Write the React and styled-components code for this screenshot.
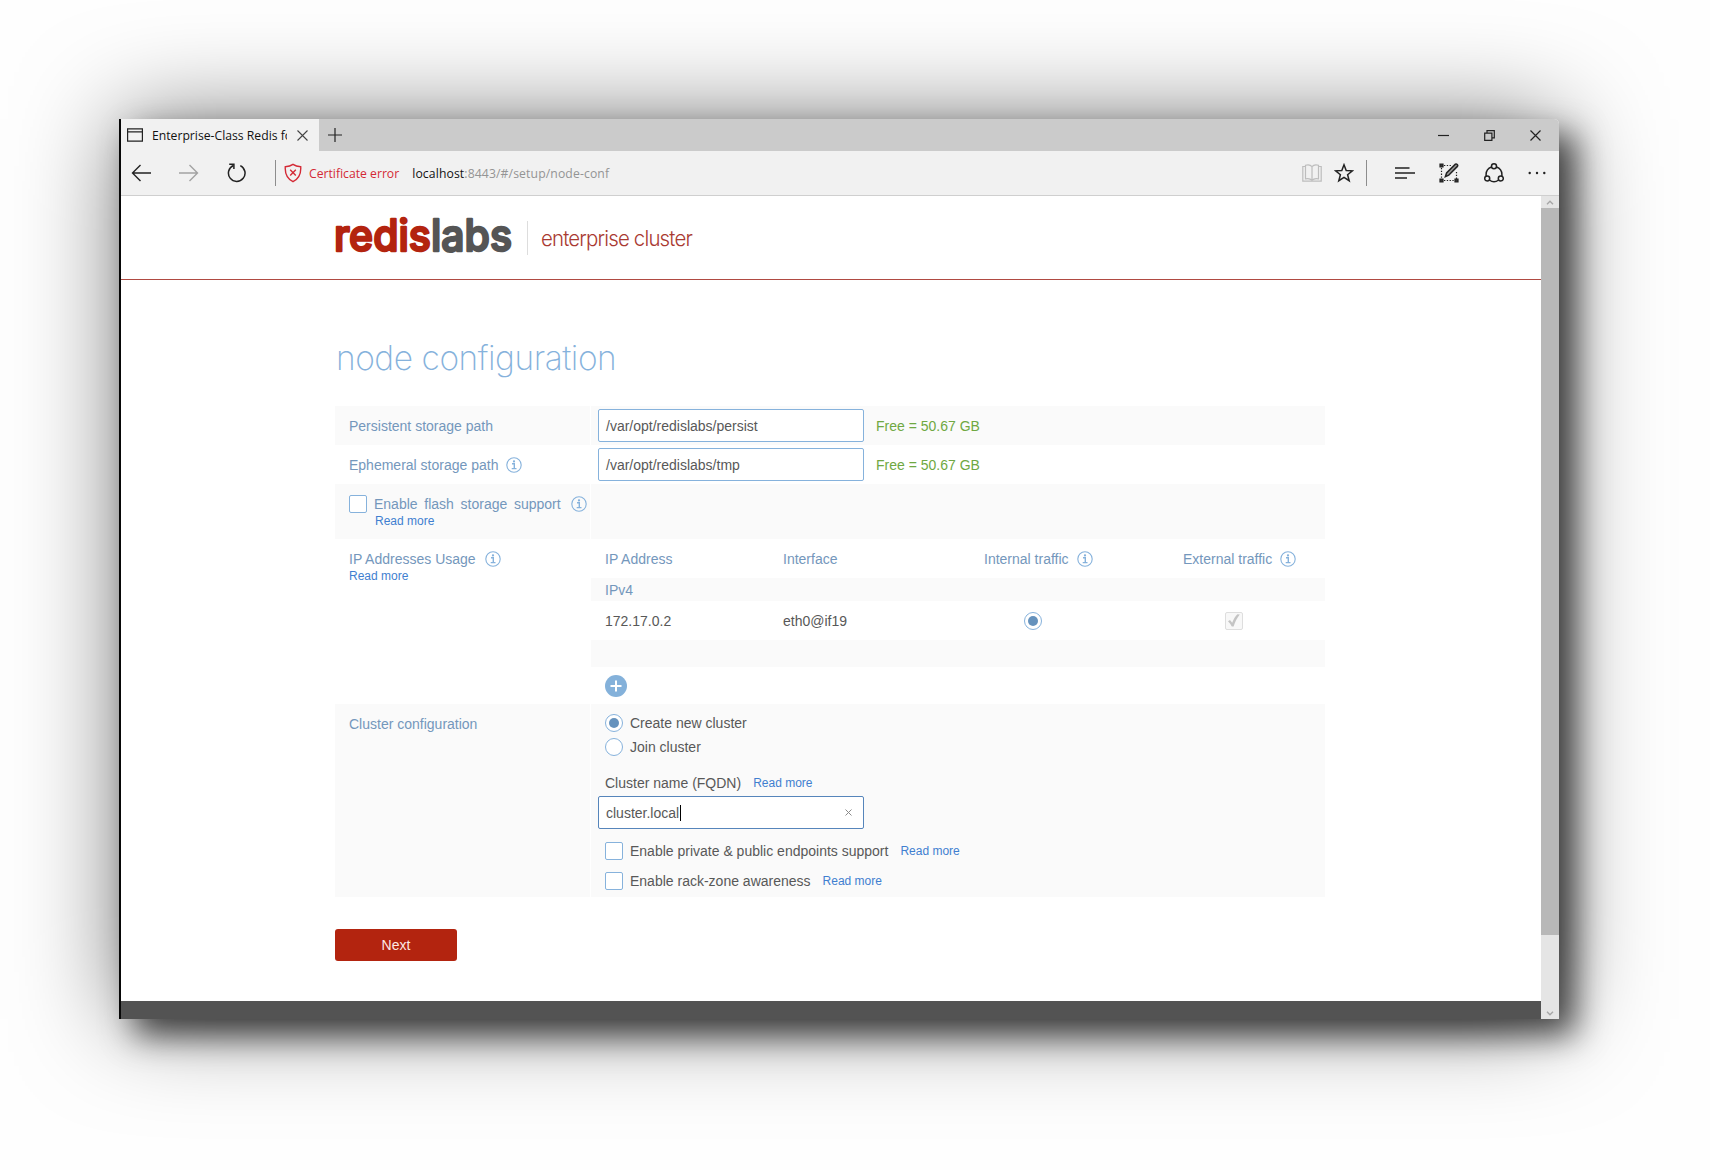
import React from "react";
import styled, { createGlobalStyle, css } from "styled-components";

const colors = {
  label: "#7497bc",
  link: "#3f7fd0",
  border: "#86b2dc",
  accent: "#6592bd",
  text: "#585858",
  red: "#b3240f",
  stripe: "#fafafa",
};

const GlobalStyle = createGlobalStyle`
  body {
    margin: 0;
    background: #fefefe;
    font-family: "Liberation Sans", Arial, sans-serif;
    font-size: 14px;
    color: ${colors.text};
  }
  * { box-sizing: border-box; }
  svg { display: block; flex: none; }
`;

/* ---------- window ---------- */

const Desktop = styled.div`
  height: 1170px;
  padding: 119px 151px 0 119px;
  overflow: hidden;
`;

const Window = styled.div`
  display: flex;
  flex-direction: column;
  width: 1440px;
  height: 900px;
  background: #fff;
  border-left: 2px solid #080808;
  border-top-right-radius: 5px;
  box-shadow:
    16px 16px 32px rgba(0, 0, 0, 0.68),
    0 0 100px rgba(0, 0, 0, 0.5);
`;

const TabStrip = styled.div`
  display: flex;
  align-items: center;
  height: 32px;
  background: #cbcbcb;
  border-top-right-radius: 5px;
  font: 12.2px "Open Sans", sans-serif;
  color: #111;
`;

const Tab = styled.div`
  display: flex;
  align-items: center;
  width: 198px;
  height: 32px;
  padding-left: 6px;
  background: #f1f1f1;
`;

const TabTitle = styled.span`
  width: 135px;
  margin: 0 10px 0 9px;
  padding-top: 1px;
  overflow: hidden;
  white-space: nowrap;
  line-height: 18px;
`;

const NewTab = styled.div`
  margin-left: 9px;
`;

const WindowControls = styled.div`
  display: flex;
  align-items: center;
  gap: 35px;
  margin-left: auto;
  padding-right: 18px;
`;

const Toolbar = styled.div`
  display: flex;
  align-items: center;
  height: 45px;
  padding: 0 13px 0 10px;
  background: #f1f1f1;
  border-bottom: 1px solid #cfcfcf;
  font: 12.2px "Open Sans", sans-serif;
`;

const NavButtons = styled.div`
  display: flex;
  align-items: center;
  gap: 28px;
  width: 144px;
`;

const Divider = styled.div`
  width: 1px;
  height: 26px;
  background: #8d8d8d;
`;

const CertError = styled.div`
  display: flex;
  align-items: center;
  gap: 7px;
  margin-left: 8px;
  color: #d42a36;
`;

const Url = styled.div`
  margin-left: 13px;
  letter-spacing: 0.12px;
  color: #949494;
  span { color: #111; }
`;

const Bookmarks = styled.div`
  display: flex;
  align-items: center;
  gap: 12px;
  margin-left: auto;
  margin-right: 12px;
`;

const Tools = styled.div`
  display: flex;
  align-items: center;
  margin-left: 28px;
  gap: 24.3px;
`;

const Viewport = styled.div`
  display: flex;
  flex: 1;
  min-height: 0;
`;

const Scrollbar = styled.div`
  display: flex;
  flex-direction: column;
  justify-content: space-between;
  width: 18px;
  background: #e5e5e5;
`;

const ArrowBox = styled.div`
  display: flex;
  align-items: center;
  justify-content: center;
  height: 12px;
`;

const Thumb = styled.div`
  height: 727px;
  margin-bottom: auto;
  background: #b8b8b8;
`;

/* ---------- page ---------- */

const Page = styled.div`
  display: flex;
  flex-direction: column;
  flex: 1;
`;

const Header = styled.header`
  display: flex;
  align-items: center;
  height: 84px;
  padding: 0 0 0 214px;
  border-bottom: 1px solid #b04a42;
`;

const LogoMark = styled.svg`
  width: 178px;
  height: 50px;
  margin-top: -6px;
  overflow: visible;
  font-family: Inter, sans-serif;
  font-size: 43.5px;
  font-weight: 500;
  stroke-width: 2.4px;
  stroke-linejoin: round;
`;

const LogoWord = styled.tspan`
  fill: ${(p) => p.$color};
  stroke: ${(p) => p.$color};
`;

const Product = styled.div`
  display: flex;
  align-items: center;
  height: 34px;
  margin-left: 14px;
  padding-left: 13px;
  border-left: 1px solid #ddd;
`;

const ProductName = styled.span`
  width: 150px;
  font-family: Inter, sans-serif;
  font-size: 22px;
  font-weight: 300;
  letter-spacing: -0.9px;
  white-space: nowrap;
  color: #a93a32;
  transform: scaleX(0.93);
  transform-origin: 0 50%;
`;

const Main = styled.main`
  display: flex;
  flex-direction: column;
  flex: 1;
  width: 1204px;
  padding-left: 214px;
`;

const Title = styled.h1`
  height: 44px;
  margin: 56px 0 26px 1px;
  font-family: Inter, sans-serif;
  font-size: 33.5px;
  font-weight: 200;
  line-height: 44px;
  letter-spacing: -0.45px;
  color: ${colors.border};
  white-space: nowrap;
`;

const Row = styled.section`
  display: grid;
  grid-template-columns: 255px 1fr;
  column-gap: 1px;
  height: ${(p) => p.$height}px;
  > * { background: ${(p) => (p.$striped ? colors.stripe : "transparent")}; }
`;

const LabelCell = styled.div`
  padding: 11px 0 0 14px;
  line-height: 18px;
  color: ${colors.label};
  white-space: nowrap;
`;

const LabelLine = styled.div`
  display: flex;
  align-items: center;
  height: 18px;
  gap: ${(p) => p.$gap || 0}px;
  word-spacing: ${(p) => p.$spacing || 0}px;
`;

const InfoSlot = styled.span`
  margin-left: 3px;
`;

const Link = styled.a`
  display: block;
  padding-top: 1px;
  font-size: 12px;
  line-height: 15px;
  color: ${colors.link};
  white-space: nowrap;
  word-spacing: 0;
  margin-left: ${(p) => p.$indent || 0}px;
`;

const FieldCell = styled.div`
  display: flex;
  align-items: flex-start;
  gap: 12px;
  padding: 3px 0 0 7px;
`;

const TextField = styled.div`
  display: flex;
  align-items: center;
  width: 266px;
  height: 33px;
  padding: 0 11px 0 7px;
  background: #fff;
  border: 1px solid ${(p) => (p.$focused ? "#5685bb" : colors.border)};
  border-radius: 2px;
`;

const Caret = styled.i`
  width: 1px;
  height: 16px;
  margin: 0 auto 0 1px;
  background: #000;
`;

const Free = styled.span`
  line-height: 34px;
  color: #6fa842;
`;

const Table = styled.div`
  display: grid;
  grid-template-rows: 39px 23px 39px 27px 37px;
`;

const TableRow = styled.div`
  display: grid;
  grid-template-columns: 178px 201px 199px 1fr;
  align-items: center;
  padding-left: 14px;
  background: ${(p) => (p.$striped ? colors.stripe : "transparent")};
  color: ${(p) => (p.$head ? colors.label : colors.text)};
`;

const HeadCell = styled.div`
  display: flex;
  align-items: center;
  gap: 8px;
  height: 20px;
`;

const ControlCell = styled.div`
  padding-left: ${(p) => p.$offset}px;
`;

const Box = styled.span`
  display: flex;
  align-items: center;
  justify-content: center;
  flex: none;
  width: 18px;
  height: 18px;
  border: 1px solid ${colors.border};
  border-radius: 2px;
  background: #fff;
  ${(p) =>
    p.$disabled &&
    css`
      border-color: #dedede;
      background: #f8f8f8;
    `}
`;

const RadioDot = styled.span`
  display: flex;
  align-items: center;
  justify-content: center;
  flex: none;
  width: 18px;
  height: 18px;
  border: 1px solid ${colors.border};
  border-radius: 50%;
  background: #fff;
  &::after {
    content: "";
    width: 10px;
    height: 10px;
    border-radius: 50%;
    background: ${(p) => (p.$checked ? colors.accent : "transparent")};
  }
`;

const ClusterCell = styled.div`
  display: flex;
  flex-direction: column;
  padding: 7px 0 0 14px;
`;

const Option = styled.label`
  display: flex;
  align-items: center;
  gap: 7px;
  height: ${(p) => p.$height}px;
  white-space: nowrap;
`;

const Caption = styled.div`
  display: flex;
  align-items: center;
  gap: 12px;
  height: 18px;
  margin-top: 15px;
`;

const NameField = styled(TextField)`
  margin: 4px 0 8px -7px;
`;

const NextButton = styled.button`
  width: 122px;
  height: 32px;
  margin-top: 32px;
  padding: 0;
  border: 0;
  border-radius: 3px;
  background: ${colors.red};
  color: #fde8e4;
  font: 14px "Liberation Sans", Arial, sans-serif;
`;

const Footer = styled.footer`
  height: 18px;
  background: #535353;
`;

/* ---------- icons ---------- */

const Svg = ({ w, h, color = "#222", sw = 1.2, children }) => (
  <svg width={w} height={h} viewBox={`0 0 ${w} ${h}`} fill="none" stroke={color} strokeWidth={sw}>
    {children}
  </svg>
);

const InfoIcon = () => (
  <Svg w={16} h={16} color={colors.border} sw={1.1}>
    <circle cx="8" cy="8" r="7.2" />
    <path d="M6 6.800h2.300v4.700M5.700 11.600h4.800" strokeWidth="1.400" />
    <circle cx="8" cy="4.400" r=".6" fill={colors.border} />
  </Svg>
);

const Cross = ({ size, color, sw }) => (
  <Svg w={size} h={size} color={color} sw={sw}>
    <path d={`M.5.5L${size - 0.5} ${size - 0.5}M${size - 0.5}.5L.5 ${size - 0.5}`} />
  </Svg>
);

const TabIcon = () => (
  <Svg w={16} h={14} sw={1.2}>
    <path d="M.6.8h14.800v12.400H.6zM.6 3.800h14.800" />
  </Svg>
);

const Arrow = ({ forward }) => (
  <Svg w={20} h={18} color={forward ? "#a2a2a2" : "#222"} sw={1.4}>
    <path d={forward ? "M0 9h18M10.500 1l8 8-8 8" : "M20 9H2M9.500 1l-8 8 8 8"} />
  </Svg>
);

const Refresh = () => (
  <Svg w={20} h={20} sw={1.5}>
    <path d="M13.300 2.600A8.300 8.300 0 1 1 6.400 2.500" />
    <path d="M2.200 1.300h4.700v4.600" />
  </Svg>
);

const Shield = () => (
  <Svg w={18} h={20} color="#d42a36" sw={1.4}>
    <path d="M9 1.400C6.800 3 4.200 3.600 1.300 3.700c-.5 7 1.600 11.800 7.700 14.900 6.100-3.100 8.200-7.900 7.700-14.900C13.800 3.600 11.200 3 9 1.400z" />
    <path d="M6.200 6.800l5.600 5.600M11.800 6.800l-5.600 5.600" />
  </Svg>
);

const Book = () => (
  <Svg w={20} h={18} color="#bdbdbd" sw={1.2}>
    <path d="M3.500 2.500H.8v14.700h18.400V2.500h-2.700" />
    <path d="M10 2.600C8.500.8 5.500.6 3.500 1.200v13.600c2.300-.5 5-.3 6.500 1.500 1.500-1.800 4.200-2 6.500-1.500V1.200C14.500.6 11.500.8 10 2.600zM10 2.600v14" />
  </Svg>
);

const Star = () => (
  <Svg w={20} h={20} sw={1.5}>
    <path d="M10 1.800l2.200 5.700 6.200.3-4.800 3.900 1.600 6-5.200-3.400-5.200 3.400 1.600-6L1.600 7.800l6.200-.3z" />
  </Svg>
);

const Hub = () => (
  <Svg w={20} h={12} sw={1.5}>
    <path d="M0 1h14.500M0 6h20M0 11h12" />
  </Svg>
);

const WebNote = () => (
  <Svg w={20} h={20} sw={1.2}>
    <path d="M5 2.500h7M2.500 5v11M5 17.500h11M17.500 9v7" strokeDasharray="1.300 1.500" />
    <path d="M1 1h3v3H1zM1 16h3v3H1zM16 16h3v3h-3z" fill="#333" />
    <path d="M6.400 13.600l1.200-3.700L16.400 1.200c1.200-.8 3 .8 2 2.200l-8.700 8.800z" fill="#999" strokeWidth="1.500" />
  </Svg>
);

const Share = () => (
  <Svg w={20} h={20} sw={1.5}>
    <circle cx="10" cy="3.300" r="2.500" />
    <circle cx="3.200" cy="15.500" r="2.500" />
    <circle cx="16.800" cy="15.500" r="2.500" />
    <path d="M7.500 4C3.500 5.500 1.700 9 2.200 13M12.500 4c4 1.500 5.800 5 5.300 9M5.400 17c3 2.200 6.200 2.200 9.200 0" />
  </Svg>
);

const More = () => (
  <svg width="18" height="4" fill="#222">
    <circle cx="1.700" cy="2" r="1.200" />
    <circle cx="9" cy="2" r="1.200" />
    <circle cx="16.300" cy="2" r="1.200" />
  </svg>
);

const Restore = () => (
  <Svg w={11} h={11} sw={1.2}>
    <path d="M.7 3.100h7.200v7.200H.7zM3 3V.7h7.300v7.200H8" />
  </Svg>
);

const Chevron = ({ down }) => (
  <Svg w={8} h={5} color="#a6a6a6" sw={1.4}>
    <path d={down ? "M1 .7l3 3 3-3" : "M1 4.300l3-3 3 3"} />
  </Svg>
);

const AddIcon = () => (
  <svg width="22" height="22">
    <circle cx="11" cy="11" r="11" fill="#84b1da" />
    <path d="M11 5.500v11M5.500 11h11" stroke="#fff" strokeWidth="2" />
  </svg>
);

const Tick = () => (
  <svg width="12" height="13" fill="#c4c4c4">
    <path d="M0 7.200l2-1.200 2.200 2.700C5.500 5.300 7.500 2 9.500.3l2.300.2C9 3.800 7 8 5.600 12.400H3.800C2.900 10.400 1.600 8.700 0 7.200z" />
  </svg>
);

/* ---------- app ---------- */

const Logo = () => (
  <LogoMark viewBox="0 0 178 50">
    <text x="-1" y="41" textLength="178" lengthAdjust="spacingAndGlyphs">
      <LogoWord $color={colors.red}>redis</LogoWord>
      <LogoWord $color="#555">labs</LogoWord>
    </text>
  </LogoMark>
);

const StorageRow = ({ label, info, value, free, striped }) => (
  <Row $height={39} $striped={striped}>
    <LabelCell>
      <LabelLine $gap={8}>{label}{info && <InfoIcon />}</LabelLine>
    </LabelCell>
    <FieldCell>
      <TextField>{value}</TextField>
      <Free>{free}</Free>
    </FieldCell>
  </Row>
);

const CheckOption = ({ text, height }) => (
  <Option $height={height}>
    <Box />
    {text}
    <Link $indent={5}>Read more</Link>
  </Option>
);

export default function App() {
  return (
    <Desktop>
      <GlobalStyle />
      <Window>
        <TabStrip>
          <Tab>
            <TabIcon />
            <TabTitle>Enterprise-Class Redis for</TabTitle>
            <Cross size={11} color="#444" sw={1.1} />
          </Tab>
          <NewTab>
            <Svg w={14} h={14} sw={1.2}><path d="M7 0v14M0 7h14" /></Svg>
          </NewTab>
          <WindowControls>
            <Svg w={11} h={11}><path d="M0 5.500h11" /></Svg>
            <Restore />
            <Cross size={11} color="#222" sw={1.2} />
          </WindowControls>
        </TabStrip>
        <Toolbar>
          <NavButtons>
            <Arrow />
            <Arrow forward />
            <Refresh />
          </NavButtons>
          <Divider />
          <CertError><Shield />Certificate error</CertError>
          <Url><span>localhost</span>:8443/#/setup/node-conf</Url>
          <Bookmarks><Book /><Star /></Bookmarks>
          <Divider />
          <Tools><Hub /><WebNote /><Share /><More /></Tools>
        </Toolbar>
        <Viewport>
          <Page>
            <Header>
              <Logo />
              <Product><ProductName>enterprise cluster</ProductName></Product>
            </Header>
            <Main>
              <Title>node configuration</Title>
              <StorageRow striped label="Persistent storage path" value="/var/opt/redislabs/persist" free="Free = 50.67 GB" />
              <StorageRow info label="Ephemeral storage path" value="/var/opt/redislabs/tmp" free="Free = 50.67 GB" />
              <Row $height={55} $striped>
                <LabelCell>
                  <LabelLine $gap={7} $spacing={2.8}>
                    <Box />Enable flash storage support<InfoSlot><InfoIcon /></InfoSlot>
                  </LabelLine>
                  <Link $indent={26}>Read more</Link>
                </LabelCell>
                <div />
              </Row>
              <Row $height={165}>
                <LabelCell>
                  <LabelLine $gap={9.5}>IP Addresses Usage<InfoIcon /></LabelLine>
                  <Link>Read more</Link>
                </LabelCell>
                <Table>
                  <TableRow $head>
                    <HeadCell>IP Address</HeadCell>
                    <HeadCell>Interface</HeadCell>
                    <HeadCell>Internal traffic<InfoIcon /></HeadCell>
                    <HeadCell>External traffic<InfoIcon /></HeadCell>
                  </TableRow>
                  <TableRow $head $striped><HeadCell>IPv4</HeadCell></TableRow>
                  <TableRow>
                    <span>172.17.0.2</span>
                    <span>eth0@if19</span>
                    <ControlCell $offset={40}><RadioDot $checked /></ControlCell>
                    <ControlCell $offset={42}><Box $disabled><Tick /></Box></ControlCell>
                  </TableRow>
                  <TableRow $striped />
                  <TableRow><AddIcon /></TableRow>
                </Table>
              </Row>
              <Row $height={193} $striped>
                <LabelCell>Cluster configuration</LabelCell>
                <ClusterCell>
                  <Option $height={24}><RadioDot $checked />Create new cluster</Option>
                  <Option $height={24}><RadioDot />Join cluster</Option>
                  <Caption>Cluster name (FQDN)<Link>Read more</Link></Caption>
                  <NameField $focused>
                    cluster.local<Caret />
                    <Cross size={7} color="#8a8a8a" sw={1} />
                  </NameField>
                  <CheckOption height={27} text="Enable private &amp; public endpoints support" />
                  <CheckOption height={33} text="Enable rack-zone awareness" />
                </ClusterCell>
              </Row>
              <NextButton>Next</NextButton>
            </Main>
            <Footer />
          </Page>
          <Scrollbar>
            <ArrowBox><Chevron /></ArrowBox>
            <Thumb />
            <ArrowBox><Chevron down /></ArrowBox>
          </Scrollbar>
        </Viewport>
      </Window>
    </Desktop>
  );
}
